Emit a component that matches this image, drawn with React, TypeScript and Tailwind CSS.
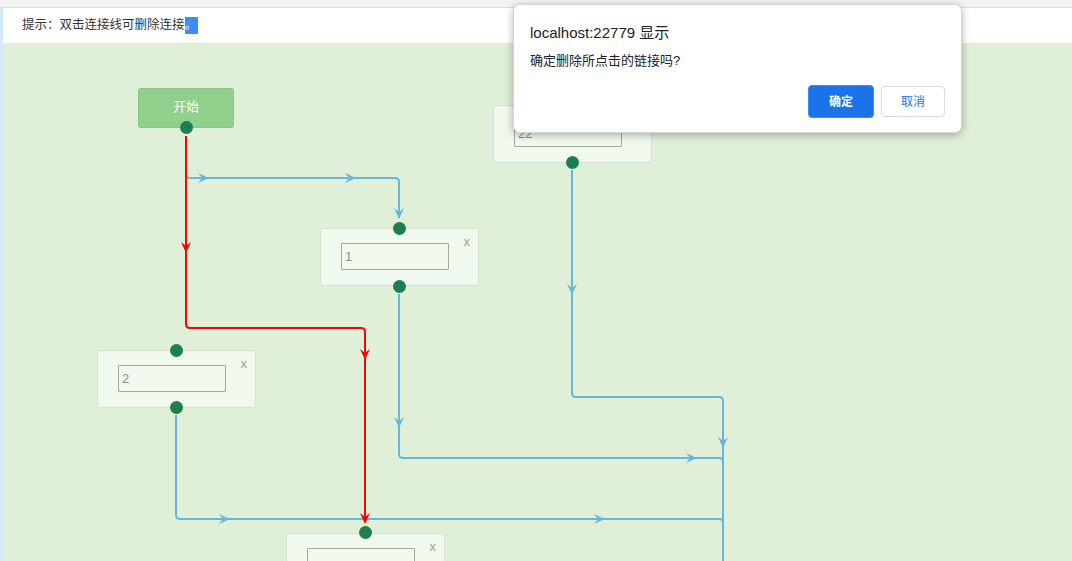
import React from 'react';

const CJK = { fontFamily: '"Liberation Sans", "Noto Sans CJK SC", sans-serif' };

// canvas origin on the page (left strip 3px, top bar 8px + hint bar 35px)
const OX = 3;
const OY = 43;

const BLUE = '#67b8d8';
const RED = '#ff0000';

type Dir = 'down' | 'right';

const Arrow: React.FC<{ x: number; y: number; dir: Dir; color: string }> = ({ x, y, dir, color }) => {
  const rot = dir === 'down' ? 0 : -90;
  return (
    <path
      d={`M ${x} ${y} L ${x - 5} ${y - 11} L ${x} ${y - 7} L ${x + 5} ${y - 11} Z`}
      fill={color}
      transform={`rotate(${rot} ${x} ${y})`}
    />
  );
};

// endpoint dot on the canvas
const Dot: React.FC<{ x: number; y: number }> = ({ x, y }) => (
  <div
    className="absolute w-[13px] h-[13px] rounded-full bg-[#1d7f4f]"
    style={{ left: x - OX - 6.5, top: y - OY - 6.5 }}
  />
);

// flow node with an input and a close mark
const Node: React.FC<{ x: number; y: number; value: string }> = ({ x, y, value }) => (
  <div
    className="absolute w-[159px] h-[58px] rounded-[3px] border border-[#d3e3cd] bg-[#f1f8ee] flex items-start pl-[20px] pt-[14px]"
    style={{ left: x - OX, top: y - OY }}
  >
    <div className="w-[108px] h-[27px] border border-[#a3a8a0] rounded-[1px] text-[13px] leading-[25px] pl-[3px] text-[#8e8e8e]">
      {value}
    </div>
    <span className="absolute right-[8px] top-[3px] text-[13px] text-[#a0a0a0]">x</span>
  </div>
);

const App: React.FC = () => {
  return (
    <div className="w-[1072px] h-[561px] overflow-hidden relative bg-white" style={CJK}>
      {/* browser top strip */}
      <div className="h-[8px] bg-[#f1f3f4] border-b border-[#dcdde0]" />

      <div className="flex h-[553px]">
        <div className="w-[3px] bg-[#d5eaf6]" />
        <div className="flex-1 flex flex-col">
          {/* hint bar */}
          <div className="h-[35px] bg-white flex items-center pl-[19px] text-[12.5px] text-[#333]">
            提示：双击连接线可删除连接
            <span className="bg-[#3a8ef5] text-white leading-[17px] pr-[1px]">。</span>
          </div>

          {/* flow canvas */}
          <div className="flex-1 relative bg-[#dfefd8] overflow-hidden">
            <svg
              className="absolute inset-0"
              width={1069}
              height={518}
              viewBox={`${OX} ${OY} 1069 518`}
            >
              {/* start -> 1 */}
              <path d="M 186 170 L 186 174 Q 186 178 190 178 L 395 178 Q 399 178 399 182 L 399 218" stroke={BLUE} strokeWidth={2} fill="none" />
              <Arrow x={209} y={178} dir="right" color={BLUE} />
              <Arrow x={356} y={178} dir="right" color={BLUE} />
              <Arrow x={399} y={219} dir="down" color={BLUE} />

              {/* 1 -> right */}
              <path d="M 399 294 L 399 454 Q 399 458 403 458 L 719 458 Q 723 458 723 462 L 723 561" stroke={BLUE} strokeWidth={2} fill="none" />
              <Arrow x={399} y={428} dir="down" color={BLUE} />
              <Arrow x={697} y={458} dir="right" color={BLUE} />

              {/* 22 -> right */}
              <path d="M 572 170 L 572 393 Q 572 397 576 397 L 719 397 Q 723 397 723 401 L 723 561" stroke={BLUE} strokeWidth={2} fill="none" />
              <Arrow x={572} y={295} dir="down" color={BLUE} />
              <Arrow x={723} y={448} dir="down" color={BLUE} />

              {/* 2 -> right */}
              <path d="M 176 415 L 176 515 Q 176 519 180 519 L 719 519 Q 723 519 723 523 L 723 561" stroke={BLUE} strokeWidth={2} fill="none" />
              <Arrow x={230} y={519} dir="right" color={BLUE} />
              <Arrow x={605} y={519} dir="right" color={BLUE} />

              {/* start -> bottom (selected, red) */}
              <path d="M 186 136 L 186 324 Q 186 328 190 328 L 361 328 Q 365 328 365 332 L 365 520" stroke={RED} strokeWidth={2} fill="none" />
              <Arrow x={186} y={253} dir="down" color={RED} />
              <Arrow x={365} y={360} dir="down" color={RED} />
              <Arrow x={365} y={524} dir="down" color={RED} />
            </svg>

            {/* start node */}
            <div
              className="absolute w-[96px] h-[40px] rounded-[3px] border border-[#86c783] bg-[#91cf8c] text-white text-[13px] flex items-center justify-center pb-[2px]"
              style={{ left: 138 - OX, top: 88 - OY }}
            >
              开始
            </div>
            <Dot x={186} y={127} />

            <Node x={493} y={105} value="22" />
            <Dot x={572} y={162} />

            <Node x={320} y={228} value="1" />
            <Dot x={399} y={228} />
            <Dot x={399} y={286} />

            <Node x={97} y={350} value="2" />
            <Dot x={176} y={350} />
            <Dot x={176} y={407} />

            <Node x={286} y={533} value="" />
            <Dot x={365} y={532} />
          </div>
        </div>
      </div>

      {/* alert dialog */}
      <div className="absolute left-[513px] top-[4px] w-[449px] h-[129px] bg-white rounded-[7px] border border-[#d6d6d6] shadow-[0_2px_8px_rgba(0,0,0,0.3)] flex flex-col pt-[18px] px-[16px] text-[#202124]">
        <div className="text-[15px] leading-[20px]">localhost:22779 显示</div>
        <div className="text-[13px] leading-[18px] mt-[9px]">确定删除所点击的链接吗?</div>
        <div className="flex justify-end gap-[7px] items-center mt-[15px]">
          <div className="w-[66px] h-[33px] rounded-[4px] bg-[#1a73e8] border border-[#3d8af0] text-white text-[12px] font-bold flex items-center justify-center">
            确定
          </div>
          <div className="w-[64px] h-[31px] rounded-[4px] bg-white border border-[#dadce0] text-[#1a73e8] text-[12px] flex items-center justify-center">
            取消
          </div>
        </div>
      </div>
    </div>
  );
};

export default App;
